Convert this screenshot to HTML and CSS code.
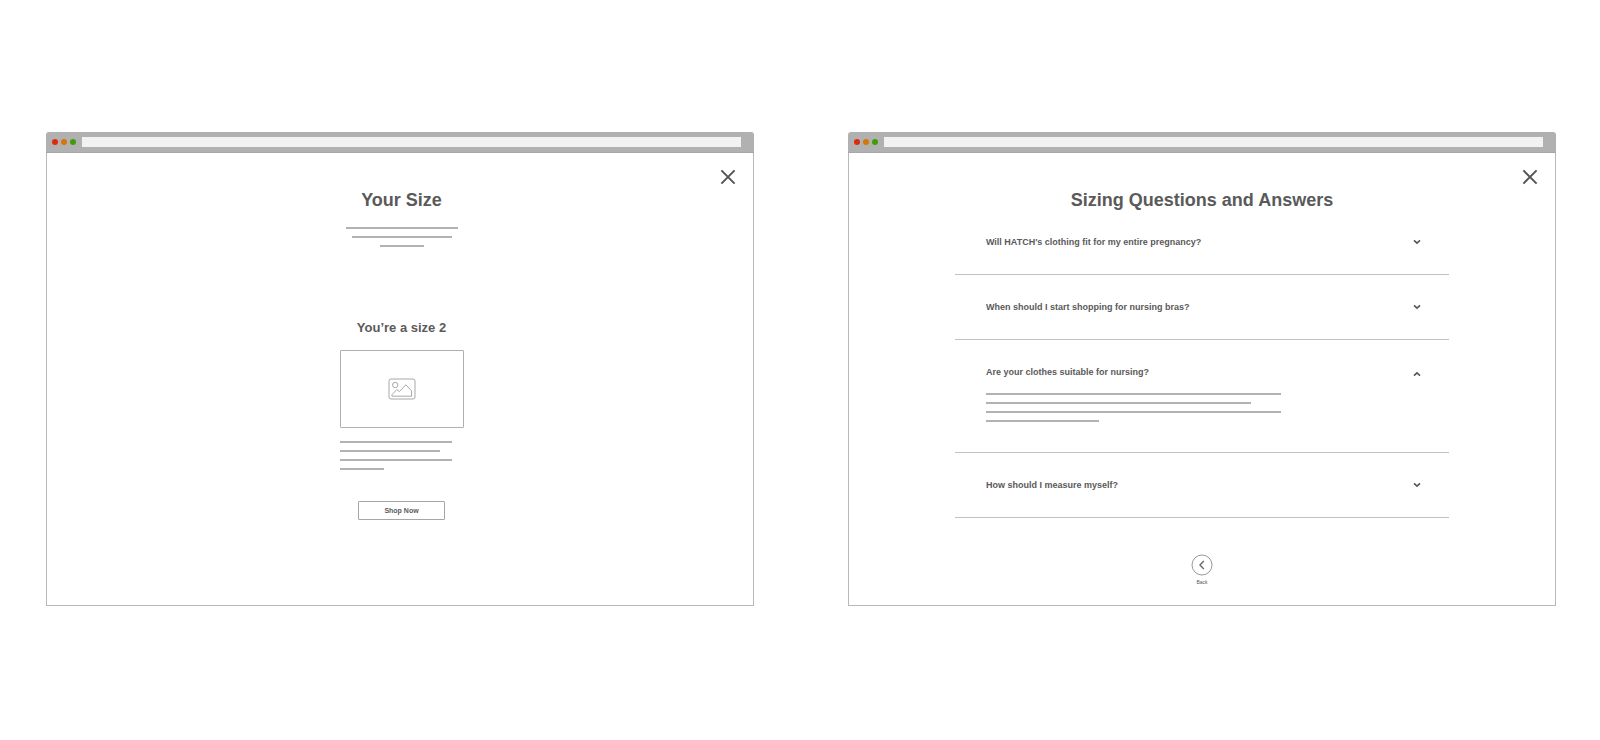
FILE: index.html
```html
<!DOCTYPE html>
<html lang="en">
<head>
<meta charset="utf-8">
<title>Sizing</title>
<link rel="stylesheet" href="styles.css">
</head>
<body>
<main class="board">
  <section class="window">
    <div class="titlebar">
      <span class="dot dot-red"></span><span class="dot dot-orange"></span><span class="dot dot-green"></span>
      <input class="address" type="text" aria-label="Address">
    </div>
    <div class="screen screen-size">
      <button class="close" type="button" aria-label="Close">
        <svg width="16" height="16" viewBox="0 0 16 16"><path d="M1.4 1.4L14.6 14.6M14.6 1.4L1.4 14.6"/></svg>
      </button>
      <h1 class="title">Your Size</h1>
      <div class="lines lines-center intro">
        <span class="line w-112"></span><span class="line w-100"></span><span class="line w-44"></span>
      </div>
      <h2 class="result">You’re a size 2</h2>
      <div class="product">
        <div class="picture">
          <svg width="28" height="22" viewBox="0 0 28 22"><rect x="1" y="1" width="26" height="20" rx="2"/><circle cx="7.2" cy="7" r="2.7"/><path d="M4 18.2V16.6L8.8 11.6L11.4 13.6L17.8 6.8L23.6 12.8V18.2Z"/></svg>
        </div>
        <div class="lines">
          <span class="line w-112"></span><span class="line w-100"></span><span class="line w-112"></span><span class="line w-44"></span>
        </div>
      </div>
      <button class="shop" type="button">Shop Now</button>
    </div>
  </section>

  <section class="window">
    <div class="titlebar">
      <span class="dot dot-red"></span><span class="dot dot-orange"></span><span class="dot dot-green"></span>
      <input class="address" type="text" aria-label="Address">
    </div>
    <div class="screen">
      <button class="close" type="button" aria-label="Close">
        <svg width="16" height="16" viewBox="0 0 16 16"><path d="M1.4 1.4L14.6 14.6M14.6 1.4L1.4 14.6"/></svg>
      </button>
      <h1 class="title">Sizing Questions and Answers</h1>
      <div class="faq">
        <div class="item">
          <button class="question" type="button" aria-expanded="false">Will HATCH's clothing fit for my entire pregnancy?
            <svg class="chevron" width="8" height="6" viewBox="0 0 8 6"><path d="M1 1.4L4 4.2L7 1.4"/></svg></button>
        </div>
        <div class="item">
          <button class="question" type="button" aria-expanded="false">When should I start shopping for nursing bras?
            <svg class="chevron" width="8" height="6" viewBox="0 0 8 6"><path d="M1 1.4L4 4.2L7 1.4"/></svg></button>
        </div>
        <div class="item">
          <button class="question" type="button" aria-expanded="true">Are your clothes suitable for nursing?
            <svg class="chevron chevron-up" width="8" height="6" viewBox="0 0 8 6"><path d="M1 4.6L4 1.8L7 4.6"/></svg></button>
          <div class="lines answer">
            <span class="line w-295"></span><span class="line w-265"></span><span class="line w-295"></span><span class="line w-113"></span>
          </div>
        </div>
        <div class="item">
          <button class="question" type="button" aria-expanded="false">How should I measure myself?
            <svg class="chevron" width="8" height="6" viewBox="0 0 8 6"><path d="M1 1.4L4 4.2L7 1.4"/></svg></button>
        </div>
      </div>
      <button class="back" type="button">
        <svg width="22" height="22" viewBox="0 0 22 22"><circle cx="11" cy="11" r="10"/><path d="M12.8 7L9 11L12.8 15"/></svg>
        <span>Back</span>
      </button>
    </div>
  </section>
</main>
</body>
</html>
```
FILE: styles.css
```css
* {
  box-sizing: border-box;
}

body {
  margin: 0;
  background: #fff;
  color: #5a5a5a;
  font-family: "Liberation Sans", Arial, sans-serif;
  font-weight: 700;
}

button {
  padding: 0;
  border: 0;
  background: none;
  color: inherit;
  font: inherit;
  cursor: pointer;
}

svg {
  display: block;
  fill: none;
  stroke: #555;
}

.board {
  display: grid;
  grid-template-columns: 1fr 1fr;
  gap: 94px;
  padding: 132px 44px 132px 46px;
}

.window {
  display: flex;
  flex-direction: column;
}

.titlebar {
  display: flex;
  align-items: center;
  gap: 3px;
  height: 21px;
  padding: 0 13px 0 6px;
  border-bottom: 1px solid #a6a6a6;
  border-radius: 3px 3px 0 0;
  background: #b1b1b1;
}

.dot {
  width: 6px;
  height: 6px;
  border-radius: 50%;
}

.dot-red {
  background: #dc2b0c;
}

.dot-orange {
  background: #d5760b;
}

.dot-green {
  background: #439b0a;
}

.address {
  flex: 1;
  min-width: 0;
  height: 10px;
  margin: 0 0 0 3px;
  padding: 0 4px;
  border: 0;
  background: #f2f2f2;
  font-size: 7px;
}

.screen {
  position: relative;
  flex: 1;
  display: flex;
  flex-direction: column;
  align-items: center;
  padding: 37px 0 20px;
  border: 1px solid #b8b8b8;
  border-top: 0;
}

.screen-size {
  padding-left: 3px;
}

.close {
  position: absolute;
  top: 16px;
  right: 17px;
}

.close svg {
  stroke-width: 2;
}

.title {
  margin: 0;
  font-size: 18px;
  line-height: 20px;
}

.lines {
  display: flex;
  flex-direction: column;
  gap: 7px;
}

.lines-center {
  align-items: center;
}

.line {
  height: 2px;
  background: #b2b2b2;
}

.w-44 {
  width: 44px;
}

.w-100 {
  width: 100px;
}

.w-112 {
  width: 112px;
}

.w-113 {
  width: 113px;
}

.w-265 {
  width: 265px;
}

.w-295 {
  width: 295px;
}

.intro {
  margin-top: 17px;
}

.result {
  margin: 73px 0 14px;
  font-size: 13px;
  line-height: 16px;
}

.product {
  display: flex;
  flex-direction: column;
  gap: 13px;
  width: 124px;
}

.picture {
  display: grid;
  place-items: center;
  height: 78px;
  border: 1px solid #b0b0b0;
  border-radius: 1px;
}

.picture svg {
  stroke: #a8a8a8;
}

.shop {
  width: 87px;
  height: 19px;
  margin-top: 31px;
  border: 1px solid #a6a6a6;
  border-radius: 1px;
  font-size: 7px;
}

.faq {
  width: 70%;
}

.item {
  padding: 26px 28px 26px 31px;
  border-bottom: 1px solid #c2c2c2;
}

.question {
  display: flex;
  align-items: center;
  justify-content: space-between;
  width: 100%;
  font-size: 9px;
  line-height: 12px;
  text-align: left;
}

.chevron {
  stroke-width: 1.6;
}

.chevron-up {
  margin-top: 4px;
}

.answer {
  margin: 15px 0 4px;
}

.back {
  display: flex;
  flex-direction: column;
  align-items: center;
  gap: 3px;
  margin-top: 36px;
  font-size: 5px;
  line-height: 6px;
  font-weight: 400;
}

.back svg {
  stroke: #999;
}

.back path {
  stroke: #6a6a6a;
  stroke-width: 1.4;
}
```
